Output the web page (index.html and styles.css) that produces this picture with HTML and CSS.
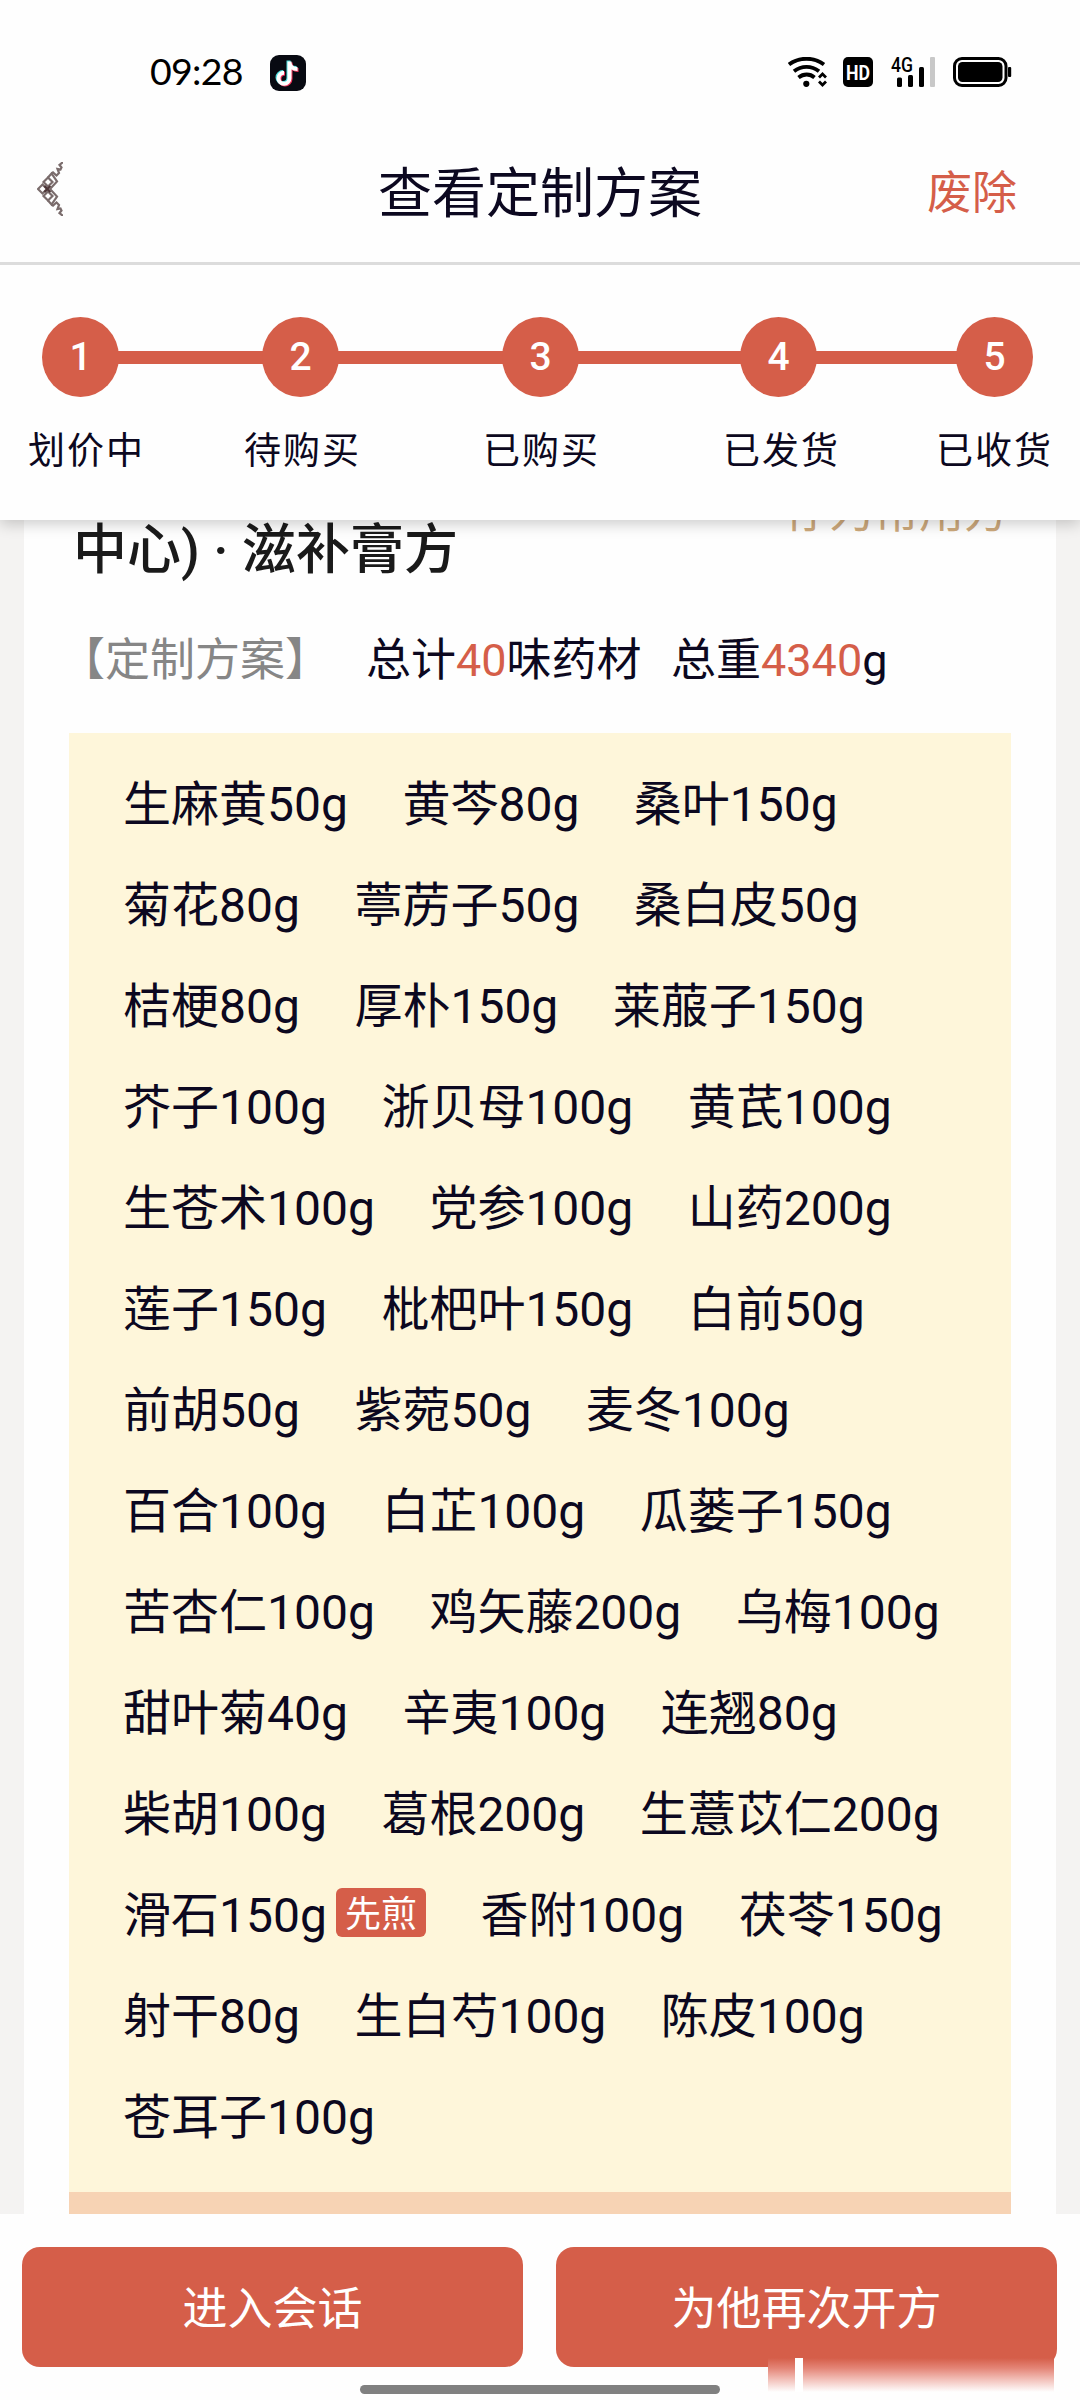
FILE: index.html
```html
<!DOCTYPE html>
<html lang="zh-CN">
<head>
<meta charset="utf-8">
<title>查看定制方案</title>
<link rel="stylesheet" href="styles.css">
</head>
<body>
<div class="statusbar">
  <span class="clock">09:28</span>
  <svg class="app-icon" viewBox="0 0 36 36" width="36" height="36">
    <rect width="36" height="36" rx="9" fill="#080a12"/>
    <g fill="none" stroke-width="4">
      <path stroke="#4de0e0" d="M18.5 5.500V22.500a5.500 5.500 0 1 1-5.500-5.500M18.500 6c0 4.500 3.500 7 8 7"/>
      <path stroke="#f0345a" d="M20.500 7.500V24a5.500 5.500 0 1 1-5.500-5.500M20.500 8c0 4.500 3.500 7 8 7"/>
      <path stroke="#fff" d="M19.500 6.500V23.200a5.500 5.500 0 1 1-5.500-5.500M19.500 7c0 4.500 3.500 7 8 7"/>
    </g>
  </svg>
  <div class="signals">
    <svg class="wifi" viewBox="0 0 40 30" width="40" height="30">
      <g fill="none" stroke="#000" stroke-width="3.800">
        <path d="M1 7.500C11-.200 26-.200 36 7.500"/>
        <path d="M6 14.300C13.500 8.300 23.500 8.300 31 14.300"/>
        <path d="M10.500 20.500c5-4 11.500-4 16 0"/>
        <path stroke-width="2.800" d="M31 20.500l3.500-3.500 3.500 3.500M31 24.500l3.500 3.500 3.500-3.500"/>
      </g>
      <circle cx="18.300" cy="26.800" r="3.100"/>
    </svg>
    <svg class="hd" viewBox="0 0 30 30" width="30" height="30">
      <rect width="30" height="30" rx="5"/>
      <text class="hd-text" x="3" y="23" textLength="24" lengthAdjust="spacingAndGlyphs">HD</text>
    </svg>
    <svg class="cell" viewBox="0 0 46 30" width="46" height="30">
      <text class="cell-text" x="0" y="14.500" textLength="22" lengthAdjust="spacingAndGlyphs">4G</text>
      <rect x="6" y="20.500" width="5" height="9.500" rx="1.500"/>
      <rect x="17" y="18" width="5" height="12" rx="1.500"/>
      <rect x="28" y="10" width="5" height="20" rx="1.500"/>
      <rect x="39" y="0" width="5" height="30" rx="1" fill="#c8c8c8"/>
    </svg>
    <svg class="battery" viewBox="0 0 59 30" width="59" height="30">
      <rect x="1.500" y="1.500" width="51.500" height="27" rx="7.500" fill="none" stroke="#000" stroke-width="3"/>
      <rect x="5" y="5" width="44.500" height="20" rx="4.500"/>
      <rect x="55" y="10" width="3.200" height="10" rx="1"/>
    </svg>
  </div>
</div>
<header class="navbar">
  <svg class="back" viewBox="0 0 26 54" width="26" height="54" fill="none" stroke="#7a6c6c" stroke-width="2.200">
    <path d="M5.500 22.500l4.500 4.500-4.500 4.500L1 27z"/>
    <path d="M11 15.500l4.500 4.500-4.500 4.500L6.500 20z"/>
    <path d="M11 29.500l4.500 4.500-4.500 4.500L6.500 34z"/>
    <path stroke="#4d3638" stroke-width="2.400" d="M7.500 24l6 6M7.500 30l6-6"/>
    <path d="M11 15.500l3.500-4 5.500 8-7 7.500 7 7.500-5.500 8-3.500-4"/>
    <path d="M14.500 11.500l1.500-1 3.500 3 2.500-2.500-1.500-4 3 .5 1-2-2-2.500L26 0"/>
    <path d="M14.500 42.500l1.500 1 3.500-3 2.500 2.500-1.500 4 3-.5 1 2-2 2.500L26 54"/>
  </svg>
  <h1 class="title">查看定制方案</h1>
  <a class="discard">废除</a>
</header>
<section class="progress">
  <div class="track">
    <span class="dot">1</span><i class="bar bar-a"></i>
    <span class="dot">2</span><i class="bar bar-b"></i>
    <span class="dot">3</span><i class="bar bar-c"></i>
    <span class="dot">4</span><i class="bar bar-d"></i>
    <span class="dot">5</span>
  </div>
  <div class="labels"><span>划价中</span><span>待购买</span><span>已购买</span><span>已发货</span><span>已收货</span></div>
</section>
<main class="content">
  <div class="save"><span>存为常用方</span></div>
  <article class="card">
    <h2 class="subtitle">中心) · 滋补膏方</h2>
    <div class="summary">
      <span class="tagline">【定制方案】</span>
      <span class="count">总计<b>40</b>味药材</span>
      <span>总重<b>4340</b>g</span>
    </div>
    <div class="herbs">
      <div class="row"><span>生麻黄50g</span><span>黄芩80g</span><span>桑叶150g</span></div>
      <div class="row"><span>菊花80g</span><span>葶苈子50g</span><span>桑白皮50g</span></div>
      <div class="row"><span>桔梗80g</span><span>厚朴150g</span><span>莱菔子150g</span></div>
      <div class="row"><span>芥子100g</span><span>浙贝母100g</span><span>黄芪100g</span></div>
      <div class="row"><span>生苍术100g</span><span>党参100g</span><span>山药200g</span></div>
      <div class="row"><span>莲子150g</span><span>枇杷叶150g</span><span>白前50g</span></div>
      <div class="row"><span>前胡50g</span><span>紫菀50g</span><span>麦冬100g</span></div>
      <div class="row"><span>百合100g</span><span>白芷100g</span><span>瓜蒌子150g</span></div>
      <div class="row"><span>苦杏仁100g</span><span>鸡矢藤200g</span><span>乌梅100g</span></div>
      <div class="row"><span>甜叶菊40g</span><span>辛夷100g</span><span>连翘80g</span></div>
      <div class="row"><span>柴胡100g</span><span>葛根200g</span><span>生薏苡仁200g</span></div>
      <div class="row"><span class="tagged">滑石150g<em class="chip">先煎</em></span><span>香附100g</span><span>茯苓150g</span></div>
      <div class="row"><span>射干80g</span><span>生白芍100g</span><span>陈皮100g</span></div>
      <div class="row"><span>苍耳子100g</span></div>
    </div>
    <div class="next-block"></div>
  </article>
</main>
<footer class="actions">
  <button class="btn">进入会话</button>
  <button class="btn">为他再次开方</button>
  <div class="smear"></div>
  <div class="home-bar"></div>
</footer>
</body>
</html>
```
FILE: styles.css
```css
* { box-sizing: border-box; margin: 0; padding: 0; }
body {
  width: 1080px; height: 2400px; overflow: hidden;
  display: flex; flex-direction: column;
  background: #fefefe; color: #0c0820;
  font-family: Roboto, "Noto Sans CJK SC", sans-serif;
  font-weight: 380;
}
.statusbar { height: 110px; display: flex; align-items: flex-start; padding: 55px 0 0 149px; color: #000; }
.clock { width: 120px; margin: -2px 0 0 1px; font: 37.500px/36px Lato, sans-serif; letter-spacing: -0.7px; }
.signals { display: flex; margin: 2px 0 0 482px; }
.wifi { margin-right: 15px; }
.hd { margin-right: 18px; }
.hd-text { font: 700 21px Roboto, sans-serif; fill: #fff; }
.cell { margin-right: 16px; overflow: visible; }
.cell-text { font: 500 21px Roboto, sans-serif; }
.navbar {
  height: 155px; display: flex; align-items: center; position: relative; z-index: 3;
  padding: 0 63px 0 37px; border-bottom: 3px solid #dcdcdc; background: #fefefe;
}
.back { margin-top: 6px; }
.title { flex: 1; margin-left: 90px; text-align: center; font-size: 54px; line-height: 60px; font-weight: 380; margin-top: 18px; }
.discard { color: #d55e49; font-size: 45px; line-height: 60px; margin-top: 15px; }
.progress {
  height: 255px; padding-top: 52px; background: #fefefe;
  position: relative; z-index: 2; box-shadow: 0 4px 14px rgba(0,0,0,.2);
}
.track { display: flex; align-items: center; padding-left: 42px; }
.dot {
  width: 77px; height: 80px; border-radius: 50%; background: #d55e49; color: #fff;
  font-size: 39px; line-height: 81px; font-weight: 500; text-align: center; flex: none;
}
.bar { height: 13px; background: #d55e49; margin: 0 -1px; }
.bar-a { width: 145px; }
.bar-b { width: 165px; }
.bar-c { width: 163px; }
.bar-d { width: 141px; }
.labels {
  display: grid; grid-template-columns: 216px 239px 240px 213px 1fr; padding-left: 28px;
  margin-top: 30px; font-size: 37px; line-height: 50px; letter-spacing: 2px; white-space: nowrap;
}
.content { height: 1694px; position: relative; padding: 0 24px; background: #f4f3f2; }
.save {
  position: absolute; right: 71px; top: 0; height: 40px;
  display: flex; align-items: flex-end; color: #cda97c; font-size: 45px; line-height: 60px;
}
.save span { margin-bottom: 17px; }
.card { height: 1694px; background: #fefefe; padding: 0 45px; overflow: hidden; }
.subtitle { font-size: 54px; line-height: 62px; height: 90px; padding: 0 0 0 4px; color: #1a1a1a; font-weight: 500; white-space: pre; }
.summary { height: 123px; display: flex; align-items: center; font-size: 45px; line-height: 60px; padding: 0 0 21px; white-space: nowrap; }
.summary b { font-weight: 380; color: #d55e49; }
.tagline { color: #868686; margin-left: -9px; width: 306px; }
.count { width: 305px; }
.herbs { height: 1459px; padding: 16px 0 0 54px; background: #fef6da; font-size: 48px; }
.row { height: 101px; display: flex; align-items: center; gap: 54.500px; white-space: nowrap; }
.tagged { display: flex; align-items: center; }
.chip {
  width: 90px; height: 49px; margin: 4px 0 0 9px; border-radius: 6px; text-align: center;
  background: #d55e49; color: #fff; font-size: 36px; line-height: 55px; font-style: normal;
}
.next-block { height: 22px; background: #f7d3b4; }
.actions { height: 186px; position: relative; display: flex; gap: 33px; padding: 33px 23px 0 22px; background: #fefefe; }
.btn {
  flex: 1; height: 120px; border: 0; border-radius: 18px; background: #d55e49; color: #fff; padding-top: 6px;
  font: 380 45px/60px Roboto, "Noto Sans CJK SC", sans-serif;
}
.smear {
  position: absolute; left: 768px; top: 144px; width: 286px; height: 34px;
  background:
    linear-gradient(#fff, #fff) 27px 0 / 8px 34px no-repeat,
    linear-gradient(#d55e49, #e48577 30%, #f3c3bc 65%, #fefefe);
}
.home-bar { position: absolute; left: 360px; top: 171px; width: 360px; height: 9px; border-radius: 5px; background: #808080; }
```
